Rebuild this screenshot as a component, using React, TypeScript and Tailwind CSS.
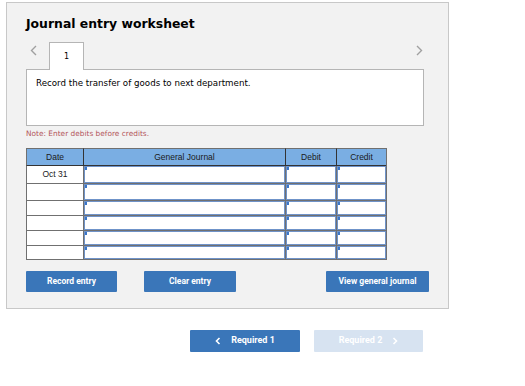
import React from 'react';

const rows = [
  { date: 'Oct 31', h: 'h-[17px]' },
  { date: '', h: 'h-[17px]' },
  { date: '', h: 'h-[15px]' },
  { date: '', h: 'h-[15px]' },
  { date: '', h: 'h-[15px]' },
  { date: '', h: 'h-[14px]' },
];

function InputCell({ className }: { className: string }) {
  return (
    <div className={`relative border-l border-t border-[#707070] ${className}`}>
      <div className="absolute inset-0 border border-[#6f93c9] bg-white">
        <span className="absolute left-0 top-0 h-[3px] w-[2px] bg-[#3a76c8]"></span>
      </div>
    </div>
  );
}

export default function App() {
  return (
    <div className="min-h-screen w-[525px] bg-white pt-[2px] pl-[6px] font-['DejaVu_Sans',sans-serif]">
      {/* 워크시트 */}
      <div className="w-[443px] h-[307px] border border-[#c8c8c8] bg-[#f2f2f2] pl-[19px] pt-[12px]">
        <h1 className="text-[12.4px] font-bold leading-[18px] text-black">Journal entry worksheet</h1>

        <div className="mt-[9px] flex h-[27px] w-[398px] items-start">
          <div className="w-[23px] pl-[4px] pt-[3px]">
            <svg width="7" height="11" viewBox="0 0 7 11"><path d="M6 1 L1.5 5.5 L6 10" stroke="#a0a0a0" strokeWidth="1.4" fill="none" /></svg>
          </div>
          <div className="flex h-[28px] w-[35px] items-center justify-center border border-b-0 border-[#b5b5b5] bg-white text-[8px] relative z-10">
            1
          </div>
          <div className="ml-auto pr-[1px] pt-[3px]">
            <svg width="7" height="11" viewBox="0 0 7 11"><path d="M1 1 L5.5 5.5 L1 10" stroke="#a0a0a0" strokeWidth="1.4" fill="none" /></svg>
          </div>
        </div>

        <div className="h-[57px] w-[398px] border border-[#b5b5b5] bg-white px-[9px] pt-[7px] text-[8.7px] text-black">
          Record the transfer of goods to next department.
        </div>

        <p className="mt-[3px] text-[7.4px] leading-[10px] text-[#b2555a]">Note: Enter debits before credits.</p>

        {/* 분개 테이블 */}
        <div className="mt-[9px] w-[361px] border-r border-b border-[#707070] font-['Liberation_Sans',sans-serif] text-[8.5px]">
          <div className="grid h-[18px] grid-cols-[57px_202px_51px_50px] bg-[#7aaee3] text-[#1a1a1a]">
            <div className="flex items-center justify-center border-l border-t border-b border-[#333] border-t-[#707070] border-l-[#707070]">Date</div>
            <div className="flex items-center justify-center border-l border-t border-b border-[#333] border-t-[#707070]">General Journal</div>
            <div className="flex items-center justify-center border-l border-t border-b border-[#333] border-t-[#707070]">Debit</div>
            <div className="flex items-center justify-center border-l border-t border-b border-[#333] border-t-[#707070]">Credit</div>
          </div>
          {rows.map((r, i) => (
            <div key={i} className={`grid grid-cols-[57px_202px_51px_50px] ${r.h}`}>
              <div className={`flex items-center justify-center border-l border-[#707070] bg-white text-[#222] ${i > 0 ? 'border-t' : ''}`}>
                {r.date}
              </div>
              <InputCell className={i === 0 ? 'border-t-0' : ''} />
              <InputCell className={i === 0 ? 'border-t-0' : ''} />
              <InputCell className={i === 0 ? 'border-t-0' : ''} />
            </div>
          ))}
        </div>

        {/* 버튼 */}
        <div className="mt-[11px] flex w-[403px] font-['Roboto',sans-serif] text-[8.5px] font-bold text-white">
          <button className="h-[21px] w-[91px] rounded-[1px] bg-[#3a76b9]">Record entry</button>
          <button className="ml-[27px] h-[21px] w-[92px] rounded-[1px] bg-[#3a76b9]">Clear entry</button>
          <button className="ml-auto h-[21px] w-[103px] rounded-[1px] bg-[#3a76b9]">View general journal</button>
        </div>
      </div>

      {/* 이동 버튼 */}
      <div className="mt-[21px] flex font-['Roboto',sans-serif] text-[9px] font-bold text-white">
        <button className="ml-[184px] flex h-[22px] w-[110px] items-center justify-center gap-[10px] rounded-[1px] bg-[#3a76b9]">
          <svg width="6" height="8" viewBox="0 0 6 8"><path d="M4.5 1 L1.5 4 L4.5 7" stroke="white" strokeWidth="1.6" fill="none" /></svg>
          Required 1
        </button>
        <button className="ml-[14px] flex h-[22px] w-[109px] items-center justify-center gap-[10px] rounded-[1px] bg-[#d7e3f1]">
          Required 2
          <svg width="6" height="8" viewBox="0 0 6 8"><path d="M1.5 1 L4.5 4 L1.5 7" stroke="white" strokeWidth="1.6" fill="none" /></svg>
        </button>
      </div>
    </div>
  );
}
